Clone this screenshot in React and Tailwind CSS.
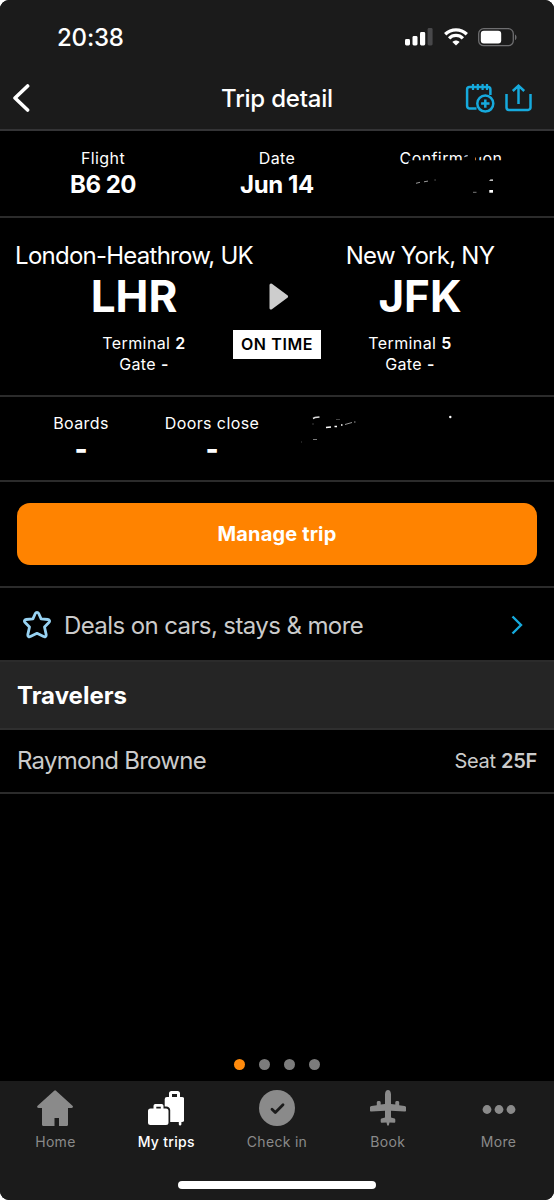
const StatusBar = () => (
  <div className="flex h-[74px] items-center justify-between pl-[57px] pr-[36px]">
    <span className="pt-0.5 text-2xl font-medium tracking-[-0.2px]">20:38</span>
    <div className="flex items-center gap-[10.500px]">
      <svg width="28" height="18" viewBox="0 0 28 18" fill="white">
        <rect x="0" y="11" width="5" height="6.5" rx="1.4" />
        <rect x="7.5" y="8" width="5" height="9.5" rx="1.4" />
        <rect x="15" y="4" width="5.2" height="13.5" rx="1.4" />
        <rect x="22.6" y="0" width="5" height="17.5" rx="1.4" fill="#48484a" />
      </svg>
      <svg width="24" height="18" viewBox="0 0 24 18" fill="none" stroke="white" strokeWidth="3.3">
        <path d="M1.2 6.2C7.2.3 16.8.3 22.8 6.2" />
        <path d="M5.1 10.3c3.9-3.9 9.9-3.9 13.8 0" />
        <path d="M8.4 13.9c2-2 5.2-2 7.2 0L12 17.5z" fill="white" stroke="none" />
      </svg>
      <svg width="40" height="19" viewBox="0 0 40 19">
        <rect x="0.7" y="0.7" width="34.6" height="17" rx="5" fill="none" stroke="#6e6e70" strokeWidth="1.3" />
        <rect x="2.8" y="2.8" width="20.4" height="12.8" rx="3" fill="white" />
        <path d="M37 6.4c2 .9 2 4.7 0 5.6z" fill="#6e6e70" />
      </svg>
    </div>
  </div>
);

const Header = () => (
  <div className="grid h-[55px] grid-cols-[120px_1fr_120px] items-start">
    <svg className="ml-3 mt-[10px]" width="18" height="28" viewBox="0 0 18 28" fill="none" stroke="white" strokeWidth="3.6">
      <path d="M15.6 2 3 14l12.6 12" strokeLinecap="round" strokeLinejoin="round" />
    </svg>
    <h1 className="text-center text-2xl leading-[50px] font-medium tracking-[-0.2px]">Trip detail</h1>
    <div className="flex justify-end gap-[10px] pr-[22px] pt-[9px]">
      <svg width="30" height="31" viewBox="0 0 30 31" fill="none" stroke="#16aadd" strokeWidth="2.5">
        <path d="M11.5 25.500H4.500a2.400 2.400 0 0 1-2.400-2.400V6.400A2.400 2.400 0 0 1 4.500 4H23a2.400 2.400 0 0 1 2.400 2.400V12" />
        <path d="M8 1v6M12.800 1v6M17.600 1v6M22 1v6" strokeWidth="2.200" />
        <circle cx="20.300" cy="20.600" r="8" />
        <path d="M20.300 16.400v8.400M16.100 20.600h8.400" />
      </svg>
      <svg width="27" height="31" viewBox="0 0 27 31" fill="none" stroke="#16aadd" strokeWidth="2.500">
        <path d="M1.500 11v13.500a2.400 2.400 0 0 0 2.400 2.400h19.200a2.400 2.400 0 0 0 2.400-2.400V11" />
        <path d="M13.500 21V3M7.800 8l5.700-5.400L19.200 8" />
      </svg>
    </div>
  </div>
);

const Field = ({ label, children }) => (
  <div className="flex flex-col items-center">
    <span className="text-base leading-5 tracking-[0.4px]">{label}</span>
    {children}
  </div>
);

const FlightSummary = () => (
  <section className="grid h-[87px] grid-cols-3 border-b-2 border-[#2b2b2b] px-4 pt-[17px]">
    <Field label="Flight">
      <span className="text-2xl leading-[33px] font-bold tracking-[-0.5px]">B6 20</span>
    </Field>
    <Field label="Date">
      <span className="text-2xl leading-[33px] font-bold tracking-[-0.4px]">Jun 14</span>
    </Field>
    <div className="relative">
      <Field label="Confirmation" />
      {/* scribble that hides the confirmation code */}
      <svg className="absolute left-0 top-0" width="174" height="50" viewBox="364 148 174 50">
        <path d="M408.500 160.300H463L464 157 469 154.500 470 150H484V155.500L479 157.500H475L475 160.300H506V172H396V166H408.500z" fill="black" />
        <path d="M464.500 156.800l3.500-1.200" stroke="#aaa" strokeWidth="1" />
        <path d="M416 183.300l4-1M424 181.800l4-.7" stroke="#aaa" strokeWidth="0.900" />
        <path d="M434.500 180h1.200" stroke="#777" />
        <path d="M473 192.300h3.500" stroke="#777" />
        <path d="M489 180.700l1.500-1.200h2.500v1.200z" fill="white" />
        <rect x="489.300" y="190" width="3.700" height="2.700" fill="white" />
      </svg>
    </div>
  </section>
);

const Airport = ({ city, code, terminal, className, shift }) => (
  <div className={`flex flex-col items-center whitespace-nowrap ${className}`}>
    <span className="text-2xl leading-[33px] font-normal tracking-[-0.75px]">{city}</span>
    <span className="text-[44px] leading-[49px] font-bold">{code}</span>
    <div className={`mt-[12px] text-center text-base leading-[20.500px] tracking-[0.400px] ${shift}`}>
      <p>
        Terminal <b className="font-semibold">{terminal}</b>
      </p>
      <p>
        Gate <b className="font-semibold">-</b>
      </p>
    </div>
  </div>
);

const Route = () => (
  <section className="flex h-[179px] justify-between border-b-2 border-[#2b2b2b] pt-[21px]">
    <Airport city="London-Heathrow, UK" code="LHR" terminal="2" className="w-[233px] pl-[35px]" shift="pl-[20px]" />
    <div className="flex w-[88px] flex-col items-center pt-[44px]">
      <svg width="20" height="27" viewBox="0 0 20 27" className="ml-1">
        <path d="M2 2l15.500 11.500L2 25z" fill="#cdcdcd" stroke="#cdcdcd" strokeWidth="3" strokeLinejoin="round" />
      </svg>
      <span className="mt-5 w-[88px] bg-white text-center text-base leading-[29px] font-semibold tracking-[0.600px] text-black">ON TIME</span>
    </div>
    <Airport city="New York, NY" code="JFK" terminal="5" className="w-[233px] pr-[35px]" shift="pr-[20px]" />
  </section>
);

const Boarding = () => (
  <section className="flex h-[85px] border-b-2 border-[#2b2b2b] pt-4">
    <div className="w-[162px]">
      <Field label="Boards">
        <b className="text-[28px] leading-8 font-extrabold">-</b>
      </Field>
    </div>
    <div className="w-[100px]">
      <Field label="Doors close">
        <b className="text-[28px] leading-8 font-extrabold">-</b>
      </Field>
    </div>
    {/* leftovers around the hidden seat group */}
    <svg className="ml-8" width="180" height="40" viewBox="294 414 180 40" fill="none">
      <path d="M313 419.500l2-1 4.500-.5" stroke="#ddd" strokeWidth="1.500" />
      <path d="M313 424.500v1" stroke="#777" />
      <path d="M336 420.500h4" stroke="#444" />
      <path d="M326 428.500l5-.5M334.500 427.500h2.500M341 426h1.500" stroke="white" strokeWidth="1.500" />
      <path d="M345 425.500l7-2M354 423h1.500" stroke="#999" strokeWidth="1" />
      <path d="M313 440.500h4" stroke="#888" strokeWidth="0.900" />
      <path d="M301 443h1" stroke="#444" />
      <circle cx="450.300" cy="418" r="1.200" fill="white" />
    </svg>
  </section>
);

const HomeIcon = () => (
  <svg width="36" height="36" viewBox="0 0 36 36" fill="currentColor">
    <path d="M17.200.8a1.300 1.300 0 0 1 1.800 0L35.500 15.800c.9.900.4 2.200-.9 2.200H31v16.500c0 .9-.5 1.500-1.500 1.500H22v-8h-4.500v8h-11c-1 0-1.500-.6-1.500-1.500V18H1.500C.2 18-.3 16.700.6 15.800z" />
  </svg>
);

const BagsIcon = () => (
  <svg width="36" height="36" viewBox="0 0 36 36" fill="currentColor">
    <path fillRule="evenodd" d="M21 7V3.500A2.500 2.500 0 0 1 23.500 1h6A2.500 2.500 0 0 1 32 3.500V7h2a2.200 2.200 0 0 1 2.200 2.200v20.600a2.200 2.200 0 0 1-2.200 2.200h-.6v2.200a1.200 1.200 0 0 1-2.600 0V32H22.200V20a4 4 0 0 0-4-3.500h-1.500V9.200A2.200 2.200 0 0 1 18.900 7zm3 0h5V4h-5z" />
    <path fillRule="evenodd" d="M5.500 18.500v-2.800a1.800 1.800 0 0 1 1.800-1.700h6.400a1.800 1.800 0 0 1 1.800 1.700v2.800H18a2.500 2.500 0 0 1 2.500 2.500v11.500A2.500 2.500 0 0 1 18 35H2.500A2.500 2.500 0 0 1 0 32.500V21a2.500 2.500 0 0 1 2.500-2.500zm2.800 0h4.500v-1.700H8.300z" />
  </svg>
);

const CheckIcon = () => (
  <svg width="36" height="36" viewBox="0 0 36 36">
    <circle cx="18" cy="18" r="18" fill="currentColor" />
    <path d="M13 19.200l3.300 3.300 7.700-7.700" fill="none" stroke="#1b1b1b" strokeWidth="2.800" strokeLinecap="round" strokeLinejoin="round" />
  </svg>
);

const PlaneIcon = () => (
  <svg width="36" height="36" viewBox="0 0 36 36" fill="currentColor">
    <path d="M18 0c1.900 0 3 2 3 4.500V14l4.300.6v-2.300c0-1.800 3.900-1.800 3.900 0v2.900l5.300.8c1 .2 1.500.8 1.500 1.600v3c0 .8-.5 1.100-1.400 1L21 20.700v6.800l3.600 1c.5.200.7.600.7 1.200v2.100c0 .7-.4 1.100-1.100 1l-4.700-.4-.6 2.600c-.3.900-1.500.9-1.800 0l-.6-2.600-4.700.4c-.7.100-1.100-.3-1.100-1v-2.100c0-.6.200-1 .7-1.200l3.600-1v-6.800L1.400 21.600c-.9.100-1.400-.2-1.400-1v-3c0-.8.500-1.400 1.500-1.600l5.300-.8v-2.900c0-1.800 3.900-1.800 3.900 0v2.300L15 14V4.500C15 2 16.100 0 18 0z" />
  </svg>
);

const MoreIcon = () => (
  <svg width="36" height="36" viewBox="0 0 36 36" fill="currentColor">
    <circle cx="6" cy="19.500" r="4.400" />
    <circle cx="18" cy="19.500" r="4.400" />
    <circle cx="30" cy="19.500" r="4.400" />
  </svg>
);

const tabs = [
  { name: "Home", Icon: HomeIcon },
  { name: "My trips", Icon: BagsIcon, active: true },
  { name: "Check in", Icon: CheckIcon },
  { name: "Book", Icon: PlaneIcon },
  { name: "More", Icon: MoreIcon },
];

const TabBar = () => (
  <nav className="h-[119px] bg-[#1b1b1b] pt-[9px]">
    <div className="grid grid-cols-5">
      {tabs.map(({ name, Icon, active }) => (
        <div key={name} className={`flex flex-col items-center ${active ? "text-white" : "text-[#8a8a8a]"}`}>
          <Icon />
          <span className={`mt-[6px] text-sm leading-5 tracking-[0.300px] ${active ? "font-medium" : ""}`}>{name}</span>
        </div>
      ))}
    </div>
    <div className="mx-auto mt-[29px] h-2 w-[198px] rounded-full bg-white" />
  </nav>
);

export default function App() {
  return (
    <div className="h-[1200px] w-[554px] bg-white">
      <div className="flex h-full flex-col overflow-hidden rounded-[9px] bg-black font-[Inter,sans-serif] text-white">
        <header className="h-[131px] border-b-2 border-[#343436] bg-[#1b1b1b]">
          <StatusBar />
          <Header />
        </header>
        <FlightSummary />
        <Route />
        <Boarding />

        <div className="h-[106px] border-b-2 border-[#2b2b2b] px-[17px] pt-[21px]">
          <button className="h-[62px] w-full rounded-[13px] bg-[#ff8300] text-xl font-bold tracking-[0.150px]">Manage trip</button>
        </div>

        <div className="flex h-[74px] items-center border-b-2 border-[#2b2b2b] pl-[22px] pr-[31px] pt-0.5 text-[#cbcbcb]">
          <svg width="30" height="30" viewBox="0 0 30 30" fill="none" stroke="#97d2f2" strokeWidth="2.800" strokeLinejoin="round">
            <path d="M13.400 3.300a1.800 1.800 0 0 1 3.200 0l2.500 5.600 6.800.6c1.800.2 2.300 1.800 1 3L22.500 17l1.700 7.600c.3 1.700-1.200 2.700-2.600 1.800L15 23.300l-6.600 3.100c-1.400.9-2.900-.1-2.600-1.800L7.500 17l-4.400-4.500c-1.300-1.200-.8-2.800 1-3l6.800-.6z" />
          </svg>
          <span className="ml-3 grow pt-[2px] text-2xl tracking-[-0.600px]">Deals on cars, stays &amp; more</span>
          <svg width="12" height="20" viewBox="0 0 12 20" fill="none" stroke="#16aadd" strokeWidth="2.400">
            <path d="M1.500 1.500 10 10l-8.500 8.500" />
          </svg>
        </div>

        <h2 className="h-[68px] border-b-2 border-[#2f2f2f] bg-[#252525] px-[17px] text-2xl leading-[67px] font-bold">Travelers</h2>

        <div className="flex h-[64px] items-center justify-between border-b-2 border-[#2b2b2b] px-[17px] text-[#cbcbcb]">
          <span className="text-2xl tracking-[-0.720px]">Raymond Browne</span>
          <span className="text-xl tracking-[-0.300px]">
            Seat <b className="font-semibold">25F</b>
          </span>
        </div>

        <div className="flex grow items-end justify-center gap-[14.300px] pb-[11px]">
          <i className="size-[11px] rounded-full bg-[#ff8a0c]" />
          <i className="size-[11px] rounded-full bg-[#7c7c7c]" />
          <i className="size-[11px] rounded-full bg-[#7c7c7c]" />
          <i className="size-[11px] rounded-full bg-[#7c7c7c]" />
        </div>
        <TabBar />
      </div>
    </div>
  );
}
